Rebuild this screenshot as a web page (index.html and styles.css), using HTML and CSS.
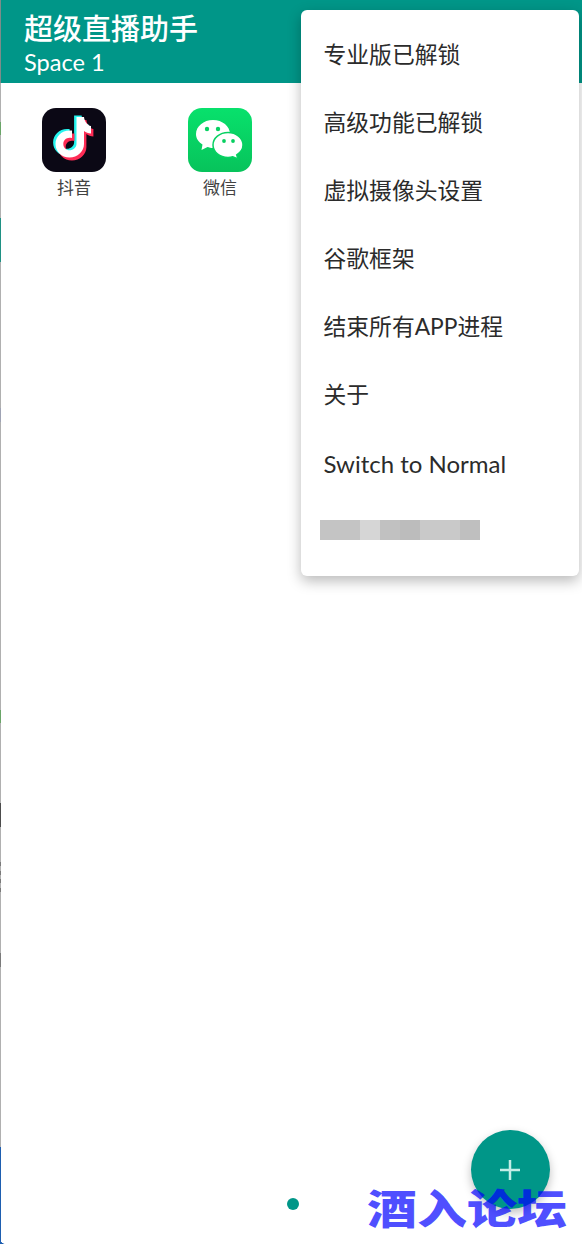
FILE: index.html
```html
<!DOCTYPE html>
<html lang="zh-CN">
<head>
<meta charset="utf-8">
<title>超级直播助手</title>
<link rel="stylesheet" href="styles.css">
</head>
<body>
<div class="screen">
  <div class="edge"></div>
  <main class="app">
    <header class="appbar">
      <div class="appbar-title">超级直播助手</div>
      <div class="appbar-sub">Space 1</div>
    </header>
    <section class="apps">
      <div class="app-item">
        <svg class="app-icon" viewBox="0 0 64 64">
          <defs>
            <path id="tiktok-note" d="M34.500 9H42C42.500 13.500 45.500 17.500 49 18V25.500C46 25.500 44 24.500 42 23V36C42 43.500 35.500 49.500 27.500 49.500C19.500 49.500 13.500 43.500 13.500 36C13.500 28.500 19.500 22.500 27.500 22.500H30V30C29 29.700 28.500 29.700 27.500 29.700C24 29.700 21.300 32.500 21.300 36C21.300 39.500 24 42.300 27.500 42.300C31 42.300 34.500 39.500 34.500 36Z"/>
          </defs>
          <rect width="64" height="64" rx="14" fill="#0b0815"/>
          <use href="#tiktok-note" fill="#25f4ee" transform="translate(-2.400 -1.600)"/>
          <use href="#tiktok-note" fill="#fe2c55" transform="translate(2.400 3)"/>
          <use href="#tiktok-note" fill="#fff"/>
        </svg>
        <span class="app-label">抖音</span>
      </div>
      <div class="app-item">
        <svg class="app-icon" viewBox="0 0 64 64">
          <defs>
            <linearGradient id="wechat-bg" x1="0" y1="0" x2="0" y2="1">
              <stop offset="0" stop-color="#08e16c"/>
              <stop offset="1" stop-color="#07c35b"/>
            </linearGradient>
          </defs>
          <rect width="64" height="64" rx="14" fill="url(#wechat-bg)"/>
          <path fill="#fff" d="M25 12C15.600 12 8 18.400 8 26c0 4.500 2.600 8 6.500 10.500L13.500 42l6-3c1.500.5 3.500 1 5.500 1 9.400 0 17-6.300 17-14S34.400 12 25 12z"/>
          <path fill="#fff" stroke="#07d162" stroke-width="1.500" d="M40 24.500C31.700 24.500 25 30.100 25 37s6.700 12.500 15 12.500c1.700 0 3.300-.2 4.800-.7L50 51l-1.300-4.200C52.500 44.500 55 41 55 37c0-6.900-6.700-12.500-15-12.500z"/>
          <circle cx="19" cy="21" r="2.200" fill="#07d162"/>
          <circle cx="30" cy="21" r="2.200" fill="#07d162"/>
          <circle cx="36" cy="33" r="1.900" fill="#07cf60"/>
          <circle cx="45" cy="33" r="1.900" fill="#07cf60"/>
        </svg>
        <span class="app-label">微信</span>
      </div>
    </section>
  </main>

  <nav class="menu">
    <div class="menu-item">专业版已解锁</div>
    <div class="menu-item">高级功能已解锁</div>
    <div class="menu-item">虚拟摄像头设置</div>
    <div class="menu-item">谷歌框架</div>
    <div class="menu-item">结束所有APP进程</div>
    <div class="menu-item">关于</div>
    <div class="menu-item menu-item-latin">Switch to Normal</div>
    <div class="menu-blur"><i></i><i></i><i></i><i></i><i></i><i></i><i></i><i></i></div>
  </nav>

  <span class="page-dot"></span>
  <button class="fab" aria-label="添加">
    <svg class="fab-plus" viewBox="0 0 20 20"><path d="M10 0v20M0 10h20"/></svg>
  </button>
  <div class="watermark">酒入论坛</div>
  <span class="edge-corner"></span>
</div>
</body>
</html>
```
FILE: styles.css
```css
* {
  box-sizing: border-box;
}

html,
body {
  margin: 0;
  height: 100%;
}

body {
  background: #fff;
  font-family: Lato, "Noto Sans CJK SC", sans-serif;
  overflow: hidden;
}

.screen {
  position: relative;
  display: flex;
  width: 582px;
  height: 1244px;
  overflow: hidden;
}

.edge {
  flex: none;
  width: 1px;
  background: linear-gradient(to bottom,
    #7d8c8a 0 83px, #b0b0b0 83px 122px, #6aa568 122px 135px, #b0b0b0 135px 218px,
    #1f9184 218px 262px, #b0b0b0 262px 408px, #9fa3b4 408px 422px, #b0b0b0 422px 710px,
    #6aa568 710px 723px, #b0b0b0 723px 803px, #4c4c4c 803px 827px, #b0b0b0 827px 862px,
    #7a7a7a 862px 866px, #b0b0b0 866px 871px, #7a7a7a 871px 875px, #b0b0b0 875px 879px,
    #7a7a7a 879px 883px, #b0b0b0 883px 888px, #7a7a7a 888px 892px, #b0b0b0 892px 953px,
    #7a7a7a 953px 967px, #b0b0b0 967px 1147px, #1e5eb0 1147px 1244px);
}

.edge-corner {
  position: absolute;
  left: 0;
  bottom: 0;
  width: 5px;
  height: 5px;
  background: radial-gradient(circle at 100% 0, transparent 4.500px, #1e5eb0 5px);
}

.app {
  flex: 1;
  display: flex;
  flex-direction: column;
  min-width: 0;
}

.appbar {
  flex: none;
  height: 83px;
  padding: 12px 0 0 23px;
  background: #009688;
  color: #fff;
}

.appbar-title {
  font-size: 29px;
  line-height: 34px;
  font-weight: 500;
}

.appbar-sub {
  margin-top: 1px;
  font-size: 23.600px;
  line-height: 30px;
}

.apps {
  display: grid;
  grid-template-columns: repeat(4, 146px);
  padding-top: 25px;
}

.app-item {
  display: flex;
  flex-direction: column;
  align-items: center;
}

.app-icon {
  display: block;
  width: 64px;
  height: 64px;
}

.app-label {
  margin-top: 4px;
  font-size: 17px;
  line-height: 24px;
  color: #424242;
}

.menu {
  position: absolute;
  top: 10px;
  left: 301px;
  width: 278px;
  height: 566px;
  padding-top: 10px;
  background: #fff;
  border-radius: 6px;
  box-shadow: 0 5px 14px rgba(0, 0, 0, .28);
}

.menu-item {
  height: 68px;
  padding-left: 22.500px;
  font-size: 22.800px;
  line-height: 68px;
  color: #2b2b2b;
  white-space: nowrap;
}

.menu-item-latin {
  font-size: 24px;
  line-height: 72px;
}

.menu-blur {
  display: flex;
  width: 160px;
  height: 20px;
  margin: 24px 0 0 19px;
}

.menu-blur i {
  flex: 1;
  background: #c4c4c4;
}

.menu-blur i:nth-child(3) {
  background: #d6d6d6;
}

.menu-blur i:nth-child(4) {
  background: #c1c1c1;
}

.menu-blur i:nth-child(5) {
  background: #bcbcbc;
}

.menu-blur i:nth-child(6),
.menu-blur i:nth-child(7) {
  background: #c9c9c9;
}

.menu-blur i:nth-child(8) {
  background: #bfbfbf;
}

.page-dot {
  position: absolute;
  left: 287px;
  top: 1198px;
  width: 12px;
  height: 12px;
  border-radius: 50%;
  background: #009688;
}

.fab {
  position: absolute;
  left: 470.500px;
  top: 1130px;
  display: flex;
  align-items: center;
  justify-content: center;
  width: 79px;
  height: 79px;
  padding: 0;
  border: 0;
  border-radius: 50%;
  background: #009688;
  box-shadow: 0 4px 10px rgba(0, 0, 0, .25);
}

.fab-plus {
  width: 20px;
  height: 20px;
  fill: none;
  stroke: #c5ede7;
  stroke-width: 2.500;
}

.watermark {
  position: absolute;
  left: 367px;
  top: 1176px;
  font-size: 50px;
  line-height: 72px;
  font-weight: 900;
  color: rgba(0, 0, 255, .69);
  white-space: nowrap;
  transform: scaleY(.82);
  transform-origin: 0 15px;
}
```
